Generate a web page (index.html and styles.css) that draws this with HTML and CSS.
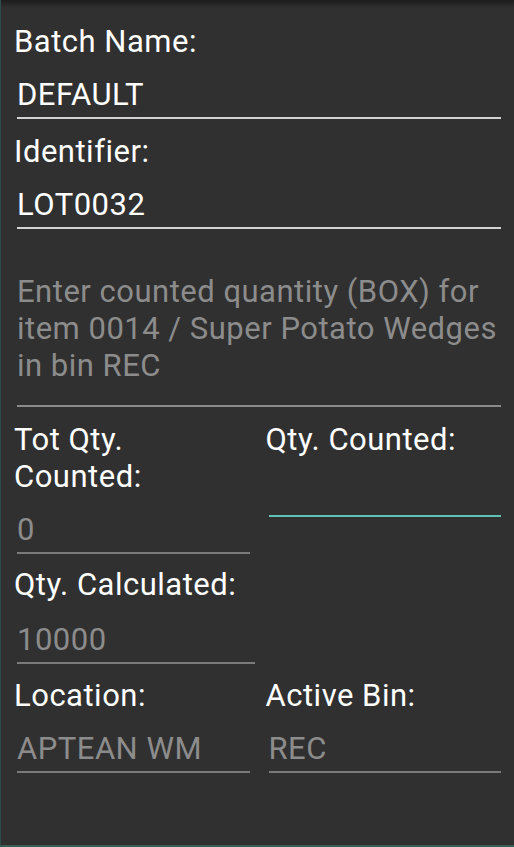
FILE: index.html
```html
<!DOCTYPE html>
<html>
<head>
    <title>Count Item</title>
    <link rel="stylesheet" href="styles.css">
</head>
<body>
    <div class="screen">
        <div class="status-bar"></div>
        <div class="form">
            <div class="label">Batch Name:</div>
            <div class="edit">DEFAULT</div>

            <div class="label">Identifier:</div>
            <div class="edit">LOT0032</div>

            <div class="edit message">Enter counted quantity (BOX) for item 0014 / Super Potato Wedges in bin REC</div>

            <div class="row">
                <div class="col">
                    <div class="label">Tot Qty.<br>Counted:</div>
                    <div class="edit disabled">0</div>
                </div>
                <div class="col">
                    <div class="label">Qty. Counted:</div>
                    <div class="edit focused"></div>
                </div>
            </div>

            <div class="calc">
                <div class="label">Qty. Calculated:</div>
                <div class="edit disabled">10000</div>
            </div>

            <div class="row">
                <div class="col">
                    <div class="label">Location:</div>
                    <div class="edit disabled">APTEAN WM</div>
                </div>
                <div class="col">
                    <div class="label">Active Bin:</div>
                    <div class="edit disabled">REC</div>
                </div>
            </div>
        </div>
    </div>
</body>
</html>
```

FILE: styles.css
```css
body {
    margin: 0;
    font-family: Roboto, "Liberation Sans", sans-serif;
    background-color: #303030;
}
.screen {
    height: 845px;
    background-color: #303030;
    border-left: 1px solid #2f4d48;
    border-bottom: 2px solid #3a5c56;
    color: #fff;
    font-size: 31px;
    line-height: 37px;
    letter-spacing: 0.5px;
}
.status-bar {
    height: 8px;
    background: linear-gradient(#1c1c1c, #2a2a2a 70%, #303030);
}
.form {
    padding: 15px 10px 0 13px;
}
.label {
    color: #fff;
}
.edit {
    margin: 0 3px 14px 3px;
    padding: 16px 0 4px 0;
    min-height: 37px;
    border-bottom: 2px solid #d2d2d2;
}
.message {
    margin-top: 44px;
    padding: 0 0 21px 0;
    color: #8c8c8c;
    border-bottom-color: #8a8a8a;
}
.disabled {
    color: #8c8c8c;
    border-bottom-color: #7a7a7a;
}
.focused {
    border-bottom-color: #5fc2b5;
}
.row {
    display: flex;
    gap: 13px;
}
.col {
    flex: 1;
}
.calc {
    width: 244px;
    margin-top: -2px;
}
.calc .edit {
    padding-top: 18px;
    margin-bottom: 13px;
}
```
